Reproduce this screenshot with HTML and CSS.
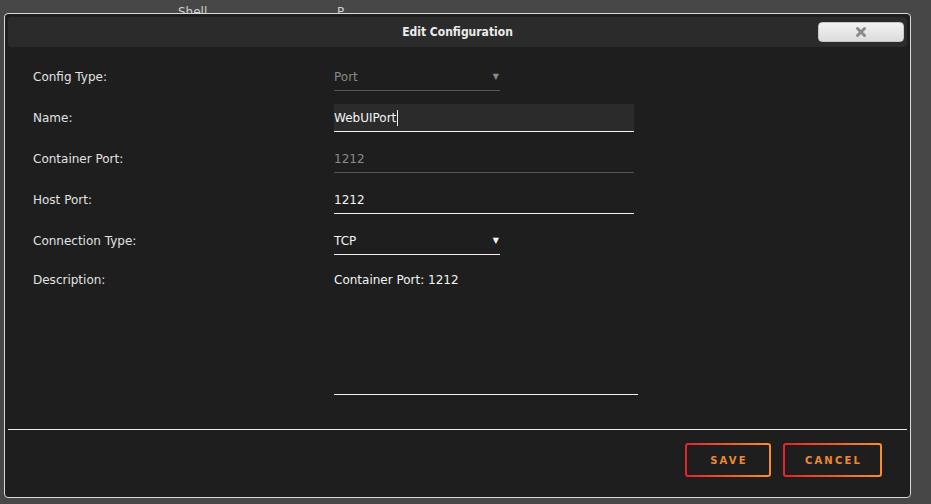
FILE: index.html
```html
<!DOCTYPE html>
<html lang="en">
<head>
    <meta charset="UTF-8">
    <meta name="viewport" content="width=device-width, initial-scale=1.0">
    <title>Edit Configuration</title>
    <link rel="stylesheet" href="styles.css">
</head>
<body>
    <div class="backdrop">
        <span class="bg-label">Shell</span>
        <span class="bg-value">P</span>
    </div>

    <div class="modal">
        <div class="modal-header">
            <span class="modal-title">Edit Configuration</span>
            <button class="close-btn" type="button">
                <svg width="12" height="12" viewBox="0 0 12 12"><path d="M2.5 2.5 L9.5 9.5 M9.5 2.5 L2.5 9.5" stroke="#8a8a8a" stroke-width="3" stroke-linecap="round"/></svg>
            </button>
        </div>

        <form class="modal-body">
            <div class="form-row">
                <label>Config Type:</label>
                <div class="field select short disabled">
                    <span>Port</span><span class="caret">&#9660;</span>
                </div>
            </div>
            <div class="form-row">
                <label>Name:</label>
                <div class="field text focus"><span>WebUIPort</span><span class="cursor"></span></div>
            </div>
            <div class="form-row">
                <label>Container Port:</label>
                <div class="field text disabled"><span>1212</span></div>
            </div>
            <div class="form-row">
                <label>Host Port:</label>
                <div class="field text"><span>1212</span></div>
            </div>
            <div class="form-row">
                <label>Connection Type:</label>
                <div class="field select short">
                    <span>TCP</span><span class="caret">&#9660;</span>
                </div>
            </div>
            <div class="form-row">
                <label>Description:</label>
                <div class="field area">Container Port: 1212</div>
            </div>
        </form>

        <div class="modal-footer">
            <button type="button" class="btn save">SAVE</button>
            <button type="button" class="btn cancel">CANCEL</button>
        </div>
    </div>
</body>
</html>
```

FILE: styles.css
```css
body { margin: 0; background: #474747; font-family: "DejaVu Sans", sans-serif; color: #e0e0e0; height: 504px; overflow: hidden; }
.backdrop { height: 13px; position: relative; font-size: 12px; color: #cfcfcf; }
.bg-label { position: absolute; left: 178px; top: 5px; }
.bg-value { position: absolute; left: 337px; top: 5px; }

.modal { position: absolute; left: 4px; top: 13px; width: 899px; height: 477px; background: #1e1e1e; border: 1px solid #d8d8d8; border-radius: 4px; padding: 3px; box-sizing: content-box; display: flex; flex-direction: column; }
.modal-header { height: 30px; flex: none; background: #2b2b2b; border-radius: 4px; display: flex; align-items: center; justify-content: center; position: relative; }
.modal-title { font-family: "DejaVu Sans Condensed", sans-serif; font-weight: bold; font-size: 12px; color: #ececec; }
.close-btn { position: absolute; right: 3px; top: 5px; width: 86px; height: 20px; border: 1px solid #c8c8c8; border-radius: 4px; background: linear-gradient(#f2f2f2, #dcdcdc); display: flex; align-items: center; justify-content: center; padding: 0; }

.modal-body { padding: 16px 0 0 25px; display: flex; flex-direction: column; gap: 13px; height: 382px; flex: none; box-sizing: border-box; margin: 0; }
.form-row { display: flex; align-items: flex-start; }
.form-row label { width: 301px; font-size: 12px; line-height: 28px; color: #e2e2e2; }
.field { width: 300px; height: 28px; box-sizing: border-box; border-bottom: 1px solid #f2f2f2; font-size: 12px; line-height: 28px; color: #f4f4f4; display: flex; align-items: center; }
.field.short { width: 166px; justify-content: space-between; }
.field.disabled { border-bottom-color: #565656; color: #8a8a8a; }
.field.focus { background: #2b2b2b; }
.caret { font-size: 8px; padding-right: 1px; }
.cursor { display: inline-block; width: 1px; height: 16px; background: #f0f0f0; margin-left: 1px; }
.field.area { width: 304px; height: 127px; align-items: flex-start; line-height: 14px; padding-top: 5px; }
.form-row:last-child label { line-height: 14px; padding-top: 5px; }

.modal-footer { border-top: 1px solid #ececec; padding: 13px 25px 0 0; display: flex; justify-content: flex-end; gap: 12px; }
.btn { height: 34px; padding: 0; border: 2px solid transparent; border-radius: 3px; background: linear-gradient(#1e1e1e, #1e1e1e) padding-box, linear-gradient(to right, #e3242c, #fb8f28) border-box; color: #ec8a2c; font-family: "DejaVu Sans", sans-serif; font-weight: bold; font-size: 10px; letter-spacing: 2.2px; text-indent: 2px; }
.btn.save { width: 86px; }
.btn.cancel { width: 99px; }
```
